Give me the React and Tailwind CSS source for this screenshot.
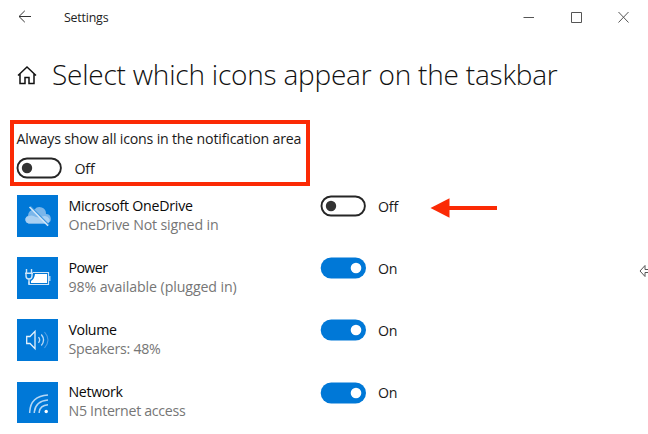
import React from "react";

function Toggle({ on }) {
  return (
    <svg className="block shrink-0" width="46" height="22" viewBox="0 0 46 22">
      {on ? (
        <>
          <rect x="0.7" y="0.5" width="45.3" height="21" rx="10.5" fill="#0078d7" />
          <circle cx="36" cy="11" r="5.3" fill="#fff" />
        </>
      ) : (
        <>
          <rect x="1.5" y="1.5" width="43.4" height="19" rx="9.5" fill="#fff" stroke="#262626" strokeWidth="1.900" />
          <circle cx="11" cy="11" r="5.2" fill="#333" />
        </>
      )}
    </svg>
  );
}

function CloudIcon() {
  return (
    <>
      <path d="M12 28.500a4 4 0 0 1-1-7.700 6 6 0 0 1 6.500-6.300 6.500 6.500 0 0 1 11.500 4.500 4.800 4.800 0 0 1 1 9.500z" fill="#7ab6ea" />
      <path d="M11.500 28.500a3.800 3.800 0 0 1-2-6.500q5-3 9.500 0 3 1 6-.5 5-2 7.500 2.500a4 4 0 0 1-2.500 4.500z" fill="#a9d0f2" />
      <path d="M13.500 11.500L32 30" stroke="#3c96df" strokeWidth="1.500" />
      <path d="M12.500 12L31 30.800" stroke="#d4e8f9" strokeWidth="1.500" />
    </>
  );
}

function PowerIcon() {
  return (
    <>
      <path d="M16 15.500H31.500V27.500H12V24.500" fill="none" stroke="#cfe5f8" strokeWidth="1.200" />
      <path d="M18 17H30V26H14V24Q17.500 22 18 17z" fill="#fff" />
      <path d="M32.800 19v5" stroke="#cfe5f8" strokeWidth="1.200" />
      <path d="M9.500 12v4M14.500 12v4M8 16.300h8M9 16.500v2.500a3 3 0 0 0 6 0v-2.500M12 22v5.500" fill="none" stroke="#cfe5f8" strokeWidth="1.400" />
    </>
  );
}

function VolumeIcon() {
  return (
    <g fill="none" strokeWidth="1.300">
      <path d="M9.700 17.500h3.300l5-5.200v17.400l-5-5.200H9.700z" stroke="#e5f1fb" />
      <path d="M21.500 18.200q2.300 2.800 0 5.600M24.300 15.500q4.500 5.500 0 11" stroke="#bddbf6" />
      <path d="M27.500 13q7 8 0 16" stroke="#549fe3" strokeWidth="1.100" />
    </g>
  );
}

function NetworkIcon() {
  return (
    <g fill="none" stroke="#b5d7f5" strokeWidth="1.500">
      <path d="M12.700 31V30Q13.500 14 31 13" />
      <path d="M17.300 31V30Q18.500 19 31 18" />
      <path d="M22.200 31V30Q23 23.500 31 22.800" />
      <circle cx="29.200" cy="29.500" r="1.700" fill="#fff" stroke="none" />
    </g>
  );
}

const rows = [
  { name: "Microsoft OneDrive", detail: "OneDrive Not signed in", on: false, Icon: CloudIcon, nameTracking: "tracking-[-0.250px]", detailTracking: "tracking-[-0.160px]" },
  { name: "Power", detail: "98% available (plugged in)", on: true, Icon: PowerIcon, nameTracking: "tracking-[-0.600px]", detailTracking: "tracking-[-0.100px]" },
  { name: "Volume", detail: "Speakers: 48%", on: true, Icon: VolumeIcon, nameTracking: "tracking-[-0.400px]", detailTracking: "tracking-[-0.280px]" },
  { name: "Network", detail: "N5 Internet access", on: true, Icon: NetworkIcon, nameTracking: "tracking-[-0.350px]", detailTracking: "tracking-[-0.300px]" },
];

function Row({ name, detail, on, Icon, nameTracking, detailTracking }) {
  return (
    <div className="flex h-[62.200px] shrink-0 items-start">
      <svg className="block shrink-0 bg-[#0078d7]" width="41" height="41.500" viewBox="0 0 41 41.500">
        <Icon />
      </svg>
      <div className="ml-[10.500px] w-[251.500px] whitespace-nowrap text-[14.200px] leading-[19px]">
        <div className={`mt-[0.500px] text-[#0a0a0a] ${nameTracking}`}>{name}</div>
        <div className={`text-[#767676] ${detailTracking}`}>{detail}</div>
      </div>
      <Toggle on={on} />
      <div className="ml-3 mt-[1.500px] text-[14.200px] leading-[20px] tracking-[-0.200px] text-[#1a1a1a]">{on ? "On" : "Off"}</div>
      {!on && (
        <svg className="ml-8 mt-[2px] block" width="68" height="22" viewBox="0 0 68 22">
          <path d="M18 11H67" stroke="#fb2a05" strokeWidth="4" />
          <path d="M0.500 11L19.500 1.300V20.700z" fill="#fb2a05" />
        </svg>
      )}
    </div>
  );
}

export default function App() {
  return (
    <div className="relative flex h-[434px] w-[648px] flex-col overflow-hidden bg-white font-['Open_Sans','Noto_Sans',sans-serif]">
      <header className="flex h-[34px] shrink-0 items-center pl-[18px] pr-[18px]">
        <svg width="14" height="14" viewBox="0 0 14 14" fill="none" stroke="#333" strokeWidth="1">
          <path d="M13 6.500H1M6.800 .8L1 6.500l5.800 5.700" />
        </svg>
        <span className="ml-8 mt-[2px] text-[12.400px] tracking-[-0.200px] text-[#222]">Settings</span>
        <svg className="ml-auto" width="108" height="14" viewBox="0 0 108 14" fill="none" stroke="#555" strokeWidth="1">
          <path d="M1.500 7.500H12M49.500 2.500H59.500V12.500H49.500zM96.500 2L106.500 12.500M106.500 2L96.500 12.500" />
        </svg>
      </header>
      <div className="flex h-[80px] shrink-0 items-center pl-[17px]">
        <svg className="mt-[2px] shrink-0" width="20" height="20" viewBox="0 0 20 20" fill="none" stroke="#111" strokeWidth="1.500">
          <path d="M1 10.500L10 2L19 10.500M3 9v9.500H8V12.500H12V18.500H17V9" />
        </svg>
        <h1 className="mb-px ml-[15px] whitespace-nowrap text-[28px] font-[350] leading-[38px] tracking-[-0.210px] text-[#111]">Select which icons appear on the taskbar</h1>
      </div>
      <section className="ml-[10px] mt-[6px] h-[66px] w-[300px] shrink-0 border-4 border-[#fb2a05] pl-[2px] pt-[5px]">
        <div className="ml-[0.600px] whitespace-nowrap text-[14.200px] leading-[20px] tracking-[-0.200px] text-[#1a1a1a]">Always show all icons in the notification area</div>
        <div className="mt-[8px] flex items-center">
          <Toggle on={false} />
          <span className="ml-[12.500px] mt-px text-[14.200px] leading-[20px] tracking-[-0.200px] text-[#1a1a1a]">Off</span>
        </div>
      </section>
      <main className="ml-[17px] mt-[9px] flex flex-col">
        {rows.map((row) => <Row key={row.name} {...row} />)}
      </main>
      <svg className="absolute left-[639px] top-[264px]" width="9" height="14" viewBox="0 0 9 14" fill="none" stroke="#555" strokeWidth="1">
        <path d="M9 5.500H6V1.500L1 7l5 5.500V8.500H9" />
      </svg>
    </div>
  );
}
